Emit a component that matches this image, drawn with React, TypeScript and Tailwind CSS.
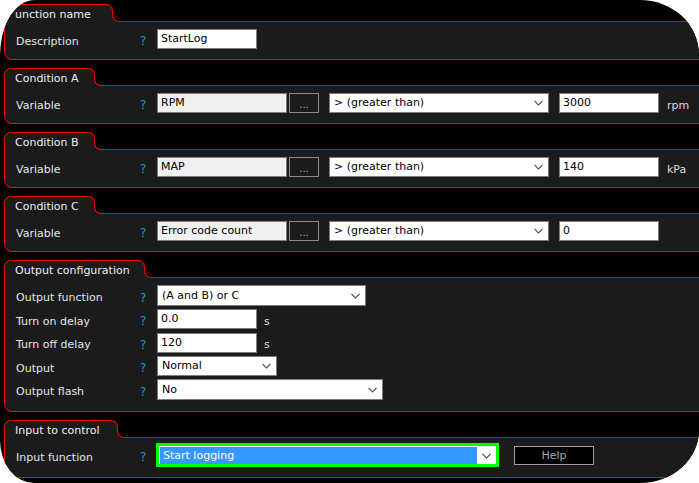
import React from "react";

function Chevron() {
  return (
    <svg width="9" height="6" viewBox="0 0 9 6" className="shrink-0">
      <polyline points="0.5,1 4.5,5 8.5,1" fill="none" stroke="#555555" strokeWidth="1.1" />
    </svg>
  );
}

function Section({
  title,
  tabW,
  bodyClass,
  children,
}: {
  title: string;
  tabW: string;
  bodyClass: string;
  children: React.ReactNode;
}) {
  return (
    <div className="flex flex-col mr-[-20px] shrink-0">
      <div className="flex items-end h-[18px]">
        <div
          className={`h-[18px] ${tabW} shrink-0 bg-[#1b1b1b] border-t border-l border-r border-[#ff0000] rounded-t-[7px] pl-[10px] pt-[2px] text-[11px] leading-[15px] text-[#eeeeee] whitespace-nowrap`}
        >
          {title}
        </div>
        <div className="flex-1 h-[11px] -ml-px bg-black border-l border-b border-[#ff0000] rounded-bl-[7px] shadow-[-4px_4px_0_0_#1b1b1b]" />
      </div>
      <div className={`bg-[#1b1b1b] border-l border-b border-r border-[#ff0000] rounded-bl-[8px] pl-[11px] ${bodyClass}`}>
        {children}
      </div>
    </div>
  );
}

function Row({ label, h, children }: { label: string; h: string; children?: React.ReactNode }) {
  return (
    <div className={`flex items-center ${h}`}>
      <div className="w-[124px] shrink-0 text-[11px] leading-[14px] text-[#e6e6e6] pt-[5px]">{label}</div>
      <div className="w-[17px] shrink-0 text-[12px] leading-[14px] text-[#1c93e3] pt-[4px]">?</div>
      {children}
    </div>
  );
}

function TextBox({ w, h = "h-[20px]", bg = "bg-white", value }: { w: string; h?: string; bg?: string; value: string }) {
  return (
    <div className={`${w} ${h} ${bg} shrink-0 border border-[#7c7c7c] pl-[3px] flex items-center text-[11px] leading-[14px] text-black`}>
      {value}
    </div>
  );
}

function Select({ w, h = "h-[20px]", value }: { w: string; h?: string; value: string }) {
  return (
    <div className={`${w} ${h} shrink-0 bg-white border border-[#7c7c7c] pl-[4px] pr-[5px] flex items-center justify-between text-[11px] leading-[14px] text-black`}>
      <span>{value}</span>
      <Chevron />
    </div>
  );
}

function DotsButton() {
  return (
    <div className="w-[30px] h-[20px] ml-[2px] shrink-0 bg-[#1b1b1b] border border-[#8a8a8a] flex items-end justify-center pb-[2px] text-[10px] leading-[10px] text-[#b5b5b5]">
      ...
    </div>
  );
}

function Unit({ children, ml = "ml-[8px]" }: { children: React.ReactNode; ml?: string }) {
  return <span className={`${ml} text-[11px] leading-[14px] text-[#dddddd] pt-[5px]`}>{children}</span>;
}

function ConditionRow({ variable, number, unit }: { variable: string; number: string; unit?: string }) {
  return (
    <Row label="Variable" h="h-[20px]">
      <TextBox w="w-[130px]" bg="bg-[#f0f0f0]" value={variable} />
      <DotsButton />
      <div className="ml-[10px]">
        <Select w="w-[220px]" value="> (greater than)" />
      </div>
      <div className="ml-[10px]">
        <TextBox w="w-[100px]" value={number} />
      </div>
      {unit ? <Unit>{unit}</Unit> : null}
    </Row>
  );
}

export default function App() {
  return (
    <div className="w-[699px] h-[483px] bg-white">
      <div className="w-full h-full bg-black overflow-hidden rounded-tl-[35px_55px] rounded-tr-[59px_55px] rounded-br-[59px_53px] rounded-bl-[34px_43px] pl-[4px] pt-[4px] flex flex-col gap-[8px] font-['DejaVu_Sans',sans-serif]">
        <Section title="unction name" tabW="w-[109px]" bodyClass="pt-[7px] pb-[10px]">
          <Row label="Description" h="h-[20px]">
            <TextBox w="w-[100px]" value="StartLog" />
          </Row>
        </Section>

        <Section title="Condition A" tabW="w-[91px]" bodyClass="pt-[7px] pb-[10px]">
          <ConditionRow variable="RPM" number="3000" unit="rpm" />
        </Section>

        <Section title="Condition B" tabW="w-[91px]" bodyClass="pt-[7px] pb-[10px]">
          <ConditionRow variable="MAP" number="140" unit="kPa" />
        </Section>

        <Section title="Condition C" tabW="w-[91px]" bodyClass="pt-[7px] pb-[10px]">
          <ConditionRow variable="Error code count" number="0" />
        </Section>

        <Section title="Output configuration" tabW="w-[141px]" bodyClass="pt-[6px] pb-[9.5px]">
          <Row label="Output function" h="h-[23.5px]">
            <Select w="w-[209px]" h="h-[21px]" value="(A and B) or C" />
          </Row>
          <Row label="Turn on delay" h="h-[23.5px]">
            <TextBox w="w-[100px]" value="0.0" />
            <Unit ml="ml-[7px]">s</Unit>
          </Row>
          <Row label="Turn off delay" h="h-[23.5px]">
            <TextBox w="w-[100px]" value="120" />
            <Unit ml="ml-[7px]">s</Unit>
          </Row>
          <Row label="Output" h="h-[23.5px]">
            <Select w="w-[120px]" value="Normal" />
          </Row>
          <Row label="Output flash" h="h-[23.5px]">
            <Select w="w-[226px]" h="h-[21px]" value="No" />
          </Row>
        </Section>

        <Section title="Input to control" tabW="w-[114px]" bodyClass="pt-[5px] pb-[10px]">
          <Row label="Input function" h="h-[24px]">
            <div className="-ml-px w-[343px] h-[24px] shrink-0 border-[3px] border-[#00ff00] bg-white p-[1px] pb-0 flex">
              <div className="flex-1 bg-[#3399ff] pl-[3px] flex items-center text-[11px] leading-[14px] text-white">
                Start logging
              </div>
              <div className="w-[18px] flex items-center justify-center">
                <Chevron />
              </div>
            </div>
            <div className="ml-[15px] w-[80px] h-[19px] shrink-0 bg-black border border-[#a0a0a0] flex items-center justify-center pt-[1px] text-[11px] leading-[14px] text-[#a8a8a8]">
              Help
            </div>
          </Row>
        </Section>
      </div>
    </div>
  );
}
